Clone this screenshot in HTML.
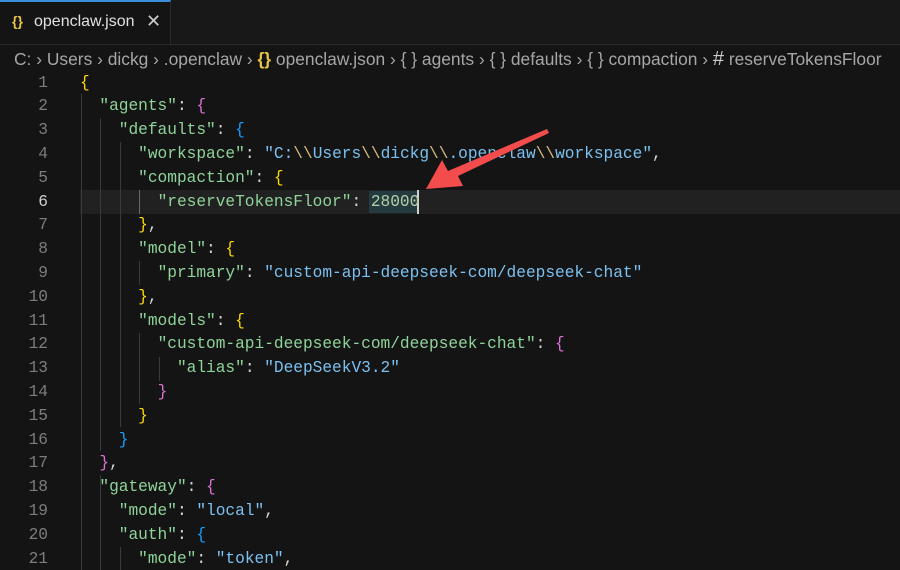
<!DOCTYPE html>
<html><head><style>
body{margin:0;width:900px;height:570px;background:#141414;overflow:hidden;position:relative;font-family:"Liberation Sans",sans-serif}
#tabbar{position:absolute;left:0;top:0;width:900px;height:44px;background:#181818;border-bottom:1px solid #2a2a2a}
#tab{position:absolute;left:0;top:0;width:171px;height:44px;background:#141414;border-top:2px solid #3b8fd8;box-sizing:border-box;border-right:1px solid #2a2a2a;color:#e0e0e0;font-size:16px}
#tab .i{position:absolute;left:12px;top:11px;color:#e8c547;font-weight:bold;font-size:14px}
#tab .t{position:absolute;left:34px;top:11px}
#tab .x{position:absolute;left:146px;top:9px;font-size:18px;color:#ccc}
#bc{position:absolute;left:14px;top:48px;color:#a6a6a6;font-size:17.4px;white-space:pre}
#bc .y{color:#e8c547;font-weight:bold}
.ln{position:absolute;left:0;width:48px;text-align:right;color:#7d7d7d;font-family:"Liberation Mono",monospace;font-size:16.2px}
.ln.a{color:#d0d0d0}
.cl{position:absolute;left:80px;font-family:"Liberation Mono",monospace;font-size:16.2px;white-space:pre;color:#d4d4d4;letter-spacing:-0.02px}
.k{color:#8fd39a}.s{color:#7cc0f0}.e{color:#d7ba7d}.n{color:#b5cea8}
.g{color:#ffd700}.p{color:#da70d6}.b{color:#179fff}
.guide{position:absolute;width:1px;background:#3a3a3a}
</style></head><body>
<div id="tabbar"><div id="tab"><span class="i">{}</span><span class="t">openclaw.json</span><span class="x">✕</span></div></div>
<div id="bc">C: › Users › dickg › .openclaw › <span class="y">{}</span> openclaw.json › { } agents › { } defaults › { } compaction › <span style="font-size:20px;color:#ccc">#</span> reserveTokensFloor</div>
<div style="position:absolute;left:80px;top:190px;width:820px;height:24px;background:#212121"></div>
<div style="position:absolute;left:369px;top:191px;width:48px;height:22px;background:#233a3e"></div>
<div style="position:absolute;left:417px;top:190px;width:2px;height:24px;background:#d0d0d0"></div>
<div class="guide" style="left:81px;top:94px;height:476px"></div>
<div class="guide" style="left:100px;top:118px;height:333px"></div>
<div class="guide" style="left:120px;top:142px;height:285px"></div>
<div class="guide" style="left:139px;top:190px;height:24px;background:#6a6a6a"></div>
<div class="guide" style="left:139px;top:261px;height:24px"></div>
<div class="guide" style="left:139px;top:333px;height:71px"></div>
<div class="guide" style="left:159px;top:357px;height:24px"></div>
<div class="guide" style="left:100px;top:475px;height:95px"></div>
<div class="guide" style="left:120px;top:547px;height:23px"></div>
<div id="code"></div>
<script>
var L=[
'<span class="g">{</span>',
'  <span class="k">"agents"</span>: <span class="p">{</span>',
'    <span class="k">"defaults"</span>: <span class="b">{</span>',
'      <span class="k">"workspace"</span>: <span class="s">"C:<span class="e">\\\\</span>Users<span class="e">\\\\</span>dickg<span class="e">\\\\</span>.openclaw<span class="e">\\\\</span>workspace"</span>,',
'      <span class="k">"compaction"</span>: <span class="g">{</span>',
'        <span class="k">"reserveTokensFloor"</span>: <span class="n">28000</span>',
'      <span class="g">}</span>,',
'      <span class="k">"model"</span>: <span class="g">{</span>',
'        <span class="k">"primary"</span>: <span class="s">"custom-api-deepseek-com/deepseek-chat"</span>',
'      <span class="g">}</span>,',
'      <span class="k">"models"</span>: <span class="g">{</span>',
'        <span class="k">"custom-api-deepseek-com/deepseek-chat"</span>: <span class="p">{</span>',
'          <span class="k">"alias"</span>: <span class="s">"DeepSeekV3.2"</span>',
'        <span class="p">}</span>',
'      <span class="g">}</span>',
'    <span class="b">}</span>',
'  <span class="p">}</span>,',
'  <span class="k">"gateway"</span>: <span class="p">{</span>',
'    <span class="k">"mode"</span>: <span class="s">"local"</span>,',
'    <span class="k">"auth"</span>: <span class="b">{</span>',
'      <span class="k">"mode"</span>: <span class="s">"token"</span>,'];
var h='';for(var i=0;i<L.length;i++){var t=73.5+i*23.8;h+='<div class="ln'+(i==5?' a':'')+'" style="top:'+t+'px">'+(i+1)+'</div><div class="cl" style="top:'+t+'px">'+L[i]+'</div>';}
document.getElementById('code').innerHTML=h;
</script>
<svg style="position:absolute;left:0;top:0" width="900" height="570"><polygon points="547,129 549,133 458,176 463,186 426,189 442,160 448,171" fill="#f24c4c"/></svg>
</body></html>
